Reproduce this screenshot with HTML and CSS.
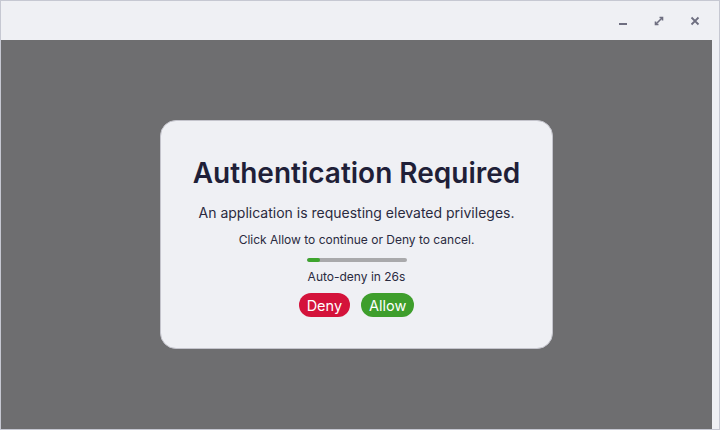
FILE: index.html
```html
<!DOCTYPE html>
<html lang="en">

<head>
  <meta charset="UTF-8">
  <meta name="viewport" content="width=device-width, initial-scale=1.0">
  <title>Authentication Required</title>
  <link rel="stylesheet" href="styles.css">
</head>

<body>
  <div class="window">
    <div class="titlebar">
      <button class="win-btn" title="Minimize">
        <svg width="12" height="12" viewBox="0 0 12 12">
          <rect x="2" y="8" width="8" height="2" fill="#6e6e80" />
        </svg>
      </button>
      <button class="win-btn" title="Maximize">
        <svg width="12" height="12" viewBox="0 0 12 12" fill="none" stroke="#6e6e80" stroke-width="1.6">
          <path d="M3 9 L9 3" />
          <path d="M6.5 2.5 H9.5 V5.5" />
          <path d="M2.5 6.5 V9.5 H5.5" />
        </svg>
      </button>
      <button class="win-btn" title="Close">
        <svg width="12" height="12" viewBox="0 0 12 12" fill="none" stroke="#6e6e80" stroke-width="1.8">
          <path d="M2.5 2.5 L9.5 9.5 M9.5 2.5 L2.5 9.5" />
        </svg>
      </button>
    </div>

    <div class="body">
      <div class="backdrop">
        <div class="dialog">
          <h1>Authentication Required</h1>
          <p class="lead">An application is requesting elevated privileges.</p>
          <p class="hint">Click Allow to continue or Deny to cancel.</p>
          <div class="progress">
            <div class="progress-fill" style="width: 13%"></div>
          </div>
          <p class="countdown">Auto-deny in <span id="seconds">26</span>s</p>
          <div class="actions">
            <button class="btn deny">Deny</button>
            <button class="btn allow">Allow</button>
          </div>
        </div>
      </div>
      <div class="edge"></div>
    </div>
  </div>
</body>

</html>
```

FILE: styles.css
```css
html,
body {
  margin: 0;
  height: 100%;
}

body {
  font-family: Inter, "Noto Sans", sans-serif;
  background-color: #eff0f4;
}

.window {
  box-sizing: border-box;
  height: 100%;
  border: 1px solid #c6c8d2;
  display: flex;
  flex-direction: column;
  background-color: #eff0f4;
}

.titlebar {
  height: 39px;
  display: flex;
  justify-content: flex-end;
  align-items: center;
  gap: 12px;
  padding-right: 12px;
}

.win-btn {
  width: 24px;
  height: 24px;
  padding: 0;
  border: none;
  background: none;
  display: flex;
  align-items: center;
  justify-content: center;
  cursor: pointer;
}

.body {
  flex: 1;
  display: flex;
}

.backdrop {
  flex: 1;
  background-color: #6e6e70;
  display: flex;
  align-items: center;
  justify-content: center;
}

.edge {
  width: 7px;
}

.dialog {
  box-sizing: border-box;
  width: 393px;
  height: 229px;
  background-color: #eff0f4;
  border: 1px solid #c4c4cc;
  border-radius: 16px;
  display: flex;
  flex-direction: column;
  align-items: center;
  color: #1f1f38;
}

.dialog h1 {
  margin: 34px 0 0;
  font-size: 28px;
  font-weight: 600;
  line-height: 36px;
}

.dialog p {
  margin: 0;
  color: #2a2a40;
}

.dialog .lead {
  margin-top: 12px;
  font-size: 14px;
  line-height: 20px;
}

.dialog .hint {
  margin-top: 9px;
  font-size: 12px;
  line-height: 16px;
}

.progress {
  margin-top: 10px;
  width: 100px;
  height: 4px;
  border-radius: 2px;
  background-color: #a9a9ab;
  overflow: hidden;
}

.progress-fill {
  height: 100%;
  background-color: #3ea52e;
  border-radius: 2px;
}

.dialog .countdown {
  margin-top: 7px;
  font-size: 12px;
  line-height: 16px;
}

.actions {
  margin-top: 8px;
  display: flex;
  gap: 11px;
}

.btn {
  height: 24px;
  padding: 0 8px;
  border: none;
  border-radius: 12px;
  font-family: inherit;
  font-size: 14.5px;
  color: white;
  cursor: pointer;
}

.deny {
  background-color: #d4133b;
}

.allow {
  background-color: #3e9e2c;
}
```
